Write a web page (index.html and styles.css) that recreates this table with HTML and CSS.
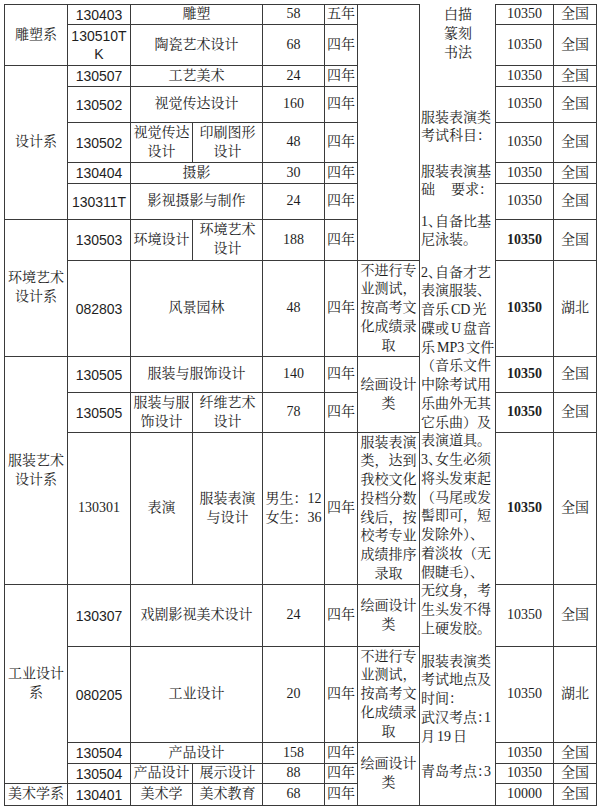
FILE: index.html
```html
<!DOCTYPE html>
<html lang="zh-CN">
<head>
<meta charset="utf-8">
<title>招生专业表</title>
<link rel="stylesheet" href="styles.css">
</head>
<body>
<div class="sheet">
  <!-- R1 -->
  <div class="c h2"><span>雕塑系</span></div>
  <div class="c code"><span>130403</span></div>
  <div class="c w2"><span>雕塑</span></div>
  <div class="c"><span>58</span></div>
  <div class="c"><span>五年</span></div>
  <div class="c h8"></div>
  <div class="c notes">
    <div class="na">白描<br>篆刻<br>书法</div>
    <div class="nb">服装表演类<br>考试科目：</div>
    <div class="nc">服装表演基<br><span class="spread"><span>础</span><span>要求：</span></span></div>
    <div class="nd">1<span class="hw">、</span>自备比基<br>尼泳装。</div>
    <div class="ne">2<span class="hw">、</span>自备才艺<br>表演服装、<br>音乐 CD 光<br>碟或 U 盘音<br>乐 MP3 文件<br>（音乐文件<br>中除考试用<br>乐曲外无其<br>它乐曲）及<br>表演道具。<br>3<span class="hw">、</span>女生必须<br>将头发束起<br>（马尾或发<br>髻即可，短<br>发除外）、<br>着淡妆（无<br>假睫毛）、<br>无纹身，考<br>生头发不得<br>上硬发胶。</div>
    <div class="nf">服装表演类<br>考试地点及<br>时间：<br>武汉考点<span class="hw">：</span>1<br>月 19 日</div>
    <div class="ng">青岛考点<span class="hw">：</span>3</div>
  </div>
  <div class="c"><span>10350</span></div>
  <div class="c"><span>全国</span></div>

  <!-- R2 -->
  <div class="c code"><span>130510T<br>K</span></div>
  <div class="c w2"><span>陶瓷艺术设计</span></div>
  <div class="c"><span>68</span></div>
  <div class="c"><span>四年</span></div>
  <div class="c"><span>10350</span></div>
  <div class="c"><span>全国</span></div>

  <!-- R3 -->
  <div class="c h5"><span>设计系</span></div>
  <div class="c code"><span>130507</span></div>
  <div class="c w2"><span>工艺美术</span></div>
  <div class="c"><span>24</span></div>
  <div class="c"><span>四年</span></div>
  <div class="c"><span>10350</span></div>
  <div class="c"><span>全国</span></div>

  <!-- R4 -->
  <div class="c code"><span>130502</span></div>
  <div class="c w2"><span>视觉传达设计</span></div>
  <div class="c"><span>160</span></div>
  <div class="c"><span>四年</span></div>
  <div class="c"><span>10350</span></div>
  <div class="c"><span>全国</span></div>

  <!-- R5 -->
  <div class="c code"><span>130502</span></div>
  <div class="c"><span>视觉传达<br>设计</span></div>
  <div class="c"><span>印刷图形<br>设计</span></div>
  <div class="c"><span>48</span></div>
  <div class="c"><span>四年</span></div>
  <div class="c"><span>10350</span></div>
  <div class="c"><span>全国</span></div>

  <!-- R6 -->
  <div class="c code"><span>130404</span></div>
  <div class="c w2"><span>摄影</span></div>
  <div class="c"><span>30</span></div>
  <div class="c"><span>四年</span></div>
  <div class="c"><span>10350</span></div>
  <div class="c"><span>全国</span></div>

  <!-- R7 -->
  <div class="c code"><span>130311T</span></div>
  <div class="c w2"><span>影视摄影与制作</span></div>
  <div class="c"><span>24</span></div>
  <div class="c"><span>四年</span></div>
  <div class="c"><span>10350</span></div>
  <div class="c"><span>全国</span></div>

  <!-- R8 -->
  <div class="c h2"><span>环境艺术<br>设计系</span></div>
  <div class="c code"><span>130503</span></div>
  <div class="c"><span>环境设计</span></div>
  <div class="c"><span>环境艺术<br>设计</span></div>
  <div class="c"><span>188</span></div>
  <div class="c"><span>四年</span></div>
  <div class="c b"><span>10350</span></div>
  <div class="c"><span>全国</span></div>

  <!-- R9 -->
  <div class="c code"><span>082803</span></div>
  <div class="c w2"><span>风景园林</span></div>
  <div class="c"><span>48</span></div>
  <div class="c"><span>四年</span></div>
  <div class="c"><span>不进行专<br>业测试，<br>按高考文<br>化成绩录<br>取</span></div>
  <div class="c b"><span>10350</span></div>
  <div class="c"><span>湖北</span></div>

  <!-- R10 -->
  <div class="c h3"><span>服装艺术<br>设计系</span></div>
  <div class="c code"><span>130505</span></div>
  <div class="c w2"><span>服装与服饰设计</span></div>
  <div class="c"><span>140</span></div>
  <div class="c"><span>四年</span></div>
  <div class="c h2"><span>绘画设计<br>类</span></div>
  <div class="c b"><span>10350</span></div>
  <div class="c"><span>全国</span></div>

  <!-- R11 -->
  <div class="c code"><span>130505</span></div>
  <div class="c"><span>服装与服<br>饰设计</span></div>
  <div class="c"><span>纤维艺术<br>设计</span></div>
  <div class="c"><span>78</span></div>
  <div class="c"><span>四年</span></div>
  <div class="c b"><span>10350</span></div>
  <div class="c"><span>全国</span></div>

  <!-- R12 -->
  <div class="c"><span>130301</span></div>
  <div class="c"><span>表演</span></div>
  <div class="c"><span>服装表演<br>与设计</span></div>
  <div class="c"><span>男生：12<br>女生：36</span></div>
  <div class="c"><span>四年</span></div>
  <div class="c"><span>服装表演<br>类，达到<br>我校文化<br>投档分数<br>线后，按<br>校考专业<br>成绩排序<br>录取</span></div>
  <div class="c b"><span>10350</span></div>
  <div class="c"><span>全国</span></div>

  <!-- R13 -->
  <div class="c h4"><span>工业设计<br>系</span></div>
  <div class="c code"><span>130307</span></div>
  <div class="c w2"><span>戏剧影视美术设计</span></div>
  <div class="c"><span>24</span></div>
  <div class="c"><span>四年</span></div>
  <div class="c"><span>绘画设计<br>类</span></div>
  <div class="c"><span>10350</span></div>
  <div class="c"><span>全国</span></div>

  <!-- R14 -->
  <div class="c code"><span>080205</span></div>
  <div class="c w2"><span>工业设计</span></div>
  <div class="c"><span>20</span></div>
  <div class="c"><span>四年</span></div>
  <div class="c"><span>不进行专<br>业测试，<br>按高考文<br>化成绩录<br>取</span></div>
  <div class="c"><span>10350</span></div>
  <div class="c"><span>湖北</span></div>

  <!-- R15 -->
  <div class="c code"><span>130504</span></div>
  <div class="c w2"><span>产品设计</span></div>
  <div class="c"><span>158</span></div>
  <div class="c"><span>四年</span></div>
  <div class="c h3"><span>绘画设计<br>类</span></div>
  <div class="c"><span>10350</span></div>
  <div class="c"><span>全国</span></div>

  <!-- R16 -->
  <div class="c code"><span>130504</span></div>
  <div class="c"><span>产品设计</span></div>
  <div class="c"><span>展示设计</span></div>
  <div class="c"><span>88</span></div>
  <div class="c"><span>四年</span></div>
  <div class="c"><span>10350</span></div>
  <div class="c"><span>全国</span></div>

  <!-- R17 -->
  <div class="c"><span>美术学系</span></div>
  <div class="c code"><span>130401</span></div>
  <div class="c"><span>美术学</span></div>
  <div class="c"><span>美术教育</span></div>
  <div class="c"><span>68</span></div>
  <div class="c"><span>四年</span></div>
  <div class="c"><span>10000</span></div>
  <div class="c"><span>全国</span></div>
</div>
</body>
</html>
```

FILE: styles.css
```css
* {
  box-sizing: border-box;
}

html, body {
  margin: 0;
  padding: 0;
  background: #ffffff;
}

.sheet {
  display: grid;
  width: max-content;
  margin: 4px 0 0 4px;
  padding: 1px;
  gap: 1px;
  background: #3a3a3a;
  grid-template-columns: 62px 62px 61px 69px 61px 32px 61px 75px 57px 42px;
  grid-template-rows: 19px 40px 20px 35px 39px 20px 35px 40px 95px 35px 39px 151px 61px 95px 20px 19px 21px;
  font-family: "Liberation Serif", "Noto Serif CJK SC", "Noto Sans CJK SC", serif;
  font-size: 14px;
  line-height: 18.75px;
  color: #1e1e1e;
}

.c {
  background: #ffffff;
  display: flex;
  align-items: center;
  justify-content: center;
  text-align: center;
  white-space: nowrap;
  overflow: hidden;
}

.code {
  font-family: "Liberation Sans", "Noto Sans CJK SC", sans-serif;
  line-height: 18px;
}

.b {
  font-weight: bold;
}

.w2 { grid-column: span 2; }
.h2 { grid-row: span 2; }
.h3 { grid-row: span 3; }
.h4 { grid-row: span 4; }
.h5 { grid-row: span 5; }
.h8 { grid-row: span 8; }

.notes {
  grid-row: span 17;
  display: block;
  text-align: left;
  margin-top: -1px;
  padding: 2px 0 0 1px;
  word-spacing: -1.5px;
}

.notes .na {
  text-align: center;
}

.notes .nb { margin-top: 46.4px; }
.notes .nc { margin-top: 16.5px; }
.notes .nd { margin-top: 12.5px; }
.notes .ne { margin-top: 13.5px; }
.notes .nf { margin-top: 14px; }
.notes .ng { margin-top: 16.2px; }

.hw {
  font-feature-settings: "halt";
}

.spread {
  display: flex;
  justify-content: space-between;
  width: 72px;
}
```
